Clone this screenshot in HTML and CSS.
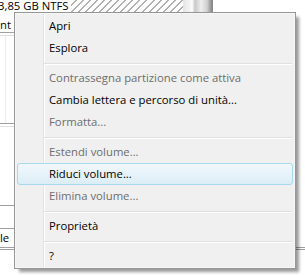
FILE: index.html
```html
<!DOCTYPE html>
<html lang="it">
<head>
  <meta charset="UTF-8">
  <title>Gestione disco</title>
  <link rel="stylesheet" href="styles.css">
</head>
<body>
  <div class="disk">
    <div class="cap">
      <span class="size">3,85 GB NTFS</span>
      <span class="hatch"></span>
      <span class="bar"></span>
    </div>
    <div class="strip nt">nt</div>
    <div class="strip line dark"></div>
    <div class="strip gap2"></div>
    <div class="strip line light"></div>
    <div class="strip c1"></div>
    <div class="strip line dark"></div>
    <div class="strip gap2"></div>
    <div class="strip line light"></div>
    <div class="strip c2"></div>
    <div class="strip line dark"></div>
    <div class="strip c3"></div>
    <div class="strip line dark"></div>
    <div class="strip le">le</div>
    <div class="line dark"></div>
    <div class="gap1"></div>
    <div class="line dark"></div>
  </div>

  <ul class="menu">
    <li class="item">Apri</li>
    <li class="item">Esplora</li>
    <li class="sep"></li>
    <li class="item off">Contrassegna partizione come attiva</li>
    <li class="item">Cambia lettera e percorso di unità...</li>
    <li class="item off">Formatta...</li>
    <li class="sep"></li>
    <li class="item off">Estendi volume...</li>
    <li class="item hot">Riduci volume...</li>
    <li class="item off">Elimina volume...</li>
    <li class="sep"></li>
    <li class="item">Proprietà</li>
    <li class="sep"></li>
    <li class="item">?</li>
  </ul>
</body>
</html>
```

FILE: styles.css
```css
body {
  margin: 0;
  height: 275px;
  overflow: hidden;
  position: relative;
  background: #fff;
  font: 11.3px "Open Sans", "Noto Sans", sans-serif;
  color: #000;
}

ul {
  margin: 0;
  padding: 0;
  list-style: none;
}

/* disco sotto il menu */
.cap {
  display: flex;
  height: 12px;
}

.size {
  margin-left: -2px;
  padding-right: 3px;
  line-height: 12px;
  white-space: nowrap;
}

.hatch {
  flex: none;
  width: 112px;
  background: repeating-linear-gradient(135deg, #fff 0 3px, #b0b0b0 3px 4.4px, #fff 4.4px 5px);
}

.bar {
  flex: none;
  width: 30px;
  background: linear-gradient(90deg, #e4e4e4, #f6f6f6 25%, #fff 30%, #c8c8c8 40%, #eee 60%, #d0d0d0 80%, #8a8a8a 96%);
}

.strip {
  width: 14px;
  overflow: hidden;
}

.nt {
  height: 20px;
  line-height: 26px;
}

.line {
  height: 1px;
}

.line.dark {
  background: #a0a0a0;
}

.line.light {
  background: #dedede;
}

.gap1 {
  height: 1px;
}

.gap2 {
  height: 2px;
}

.c1 {
  height: 87px;
  background: linear-gradient(90deg, transparent 5px, #ececec 5px 6px, transparent 6px);
}

.c2 {
  height: 78px;
}

.c3 {
  height: 22px;
}

.le {
  height: 18px;
  line-height: 18px;
}

/* menu contestuale */
.menu {
  position: absolute;
  left: 14px;
  top: 12px;
  width: 280px;
  padding: 2px 0 1px;
  border: 1px solid #979797;
  background: linear-gradient(90deg, #f0f0f0 28px, #e2e3e3 28px 29px, #fff 29px 30px, #f0f0f0 30px);
  box-shadow: inset 0 0 0 1px #f6f6f6, 4px 4px 3px -1px rgba(0, 0, 0, 0.4);
}

.item {
  height: 22px;
  line-height: 22px;
  margin: 0 2px;
  padding-left: 32px;
  white-space: nowrap;
}

.item.off {
  color: #6d6d6d;
}

.item.hot {
  height: 20px;
  line-height: 20px;
  padding-left: 31px;
  border: 1px solid #a8d8eb;
  border-radius: 3px;
  background: linear-gradient(#f1f8fc, #dcedf6);
}

.sep {
  height: 0;
  margin: 4px 3px 2px 29px;
  border-top: 1px solid #e0e0e0;
  border-bottom: 1px solid #fff;
}
```
